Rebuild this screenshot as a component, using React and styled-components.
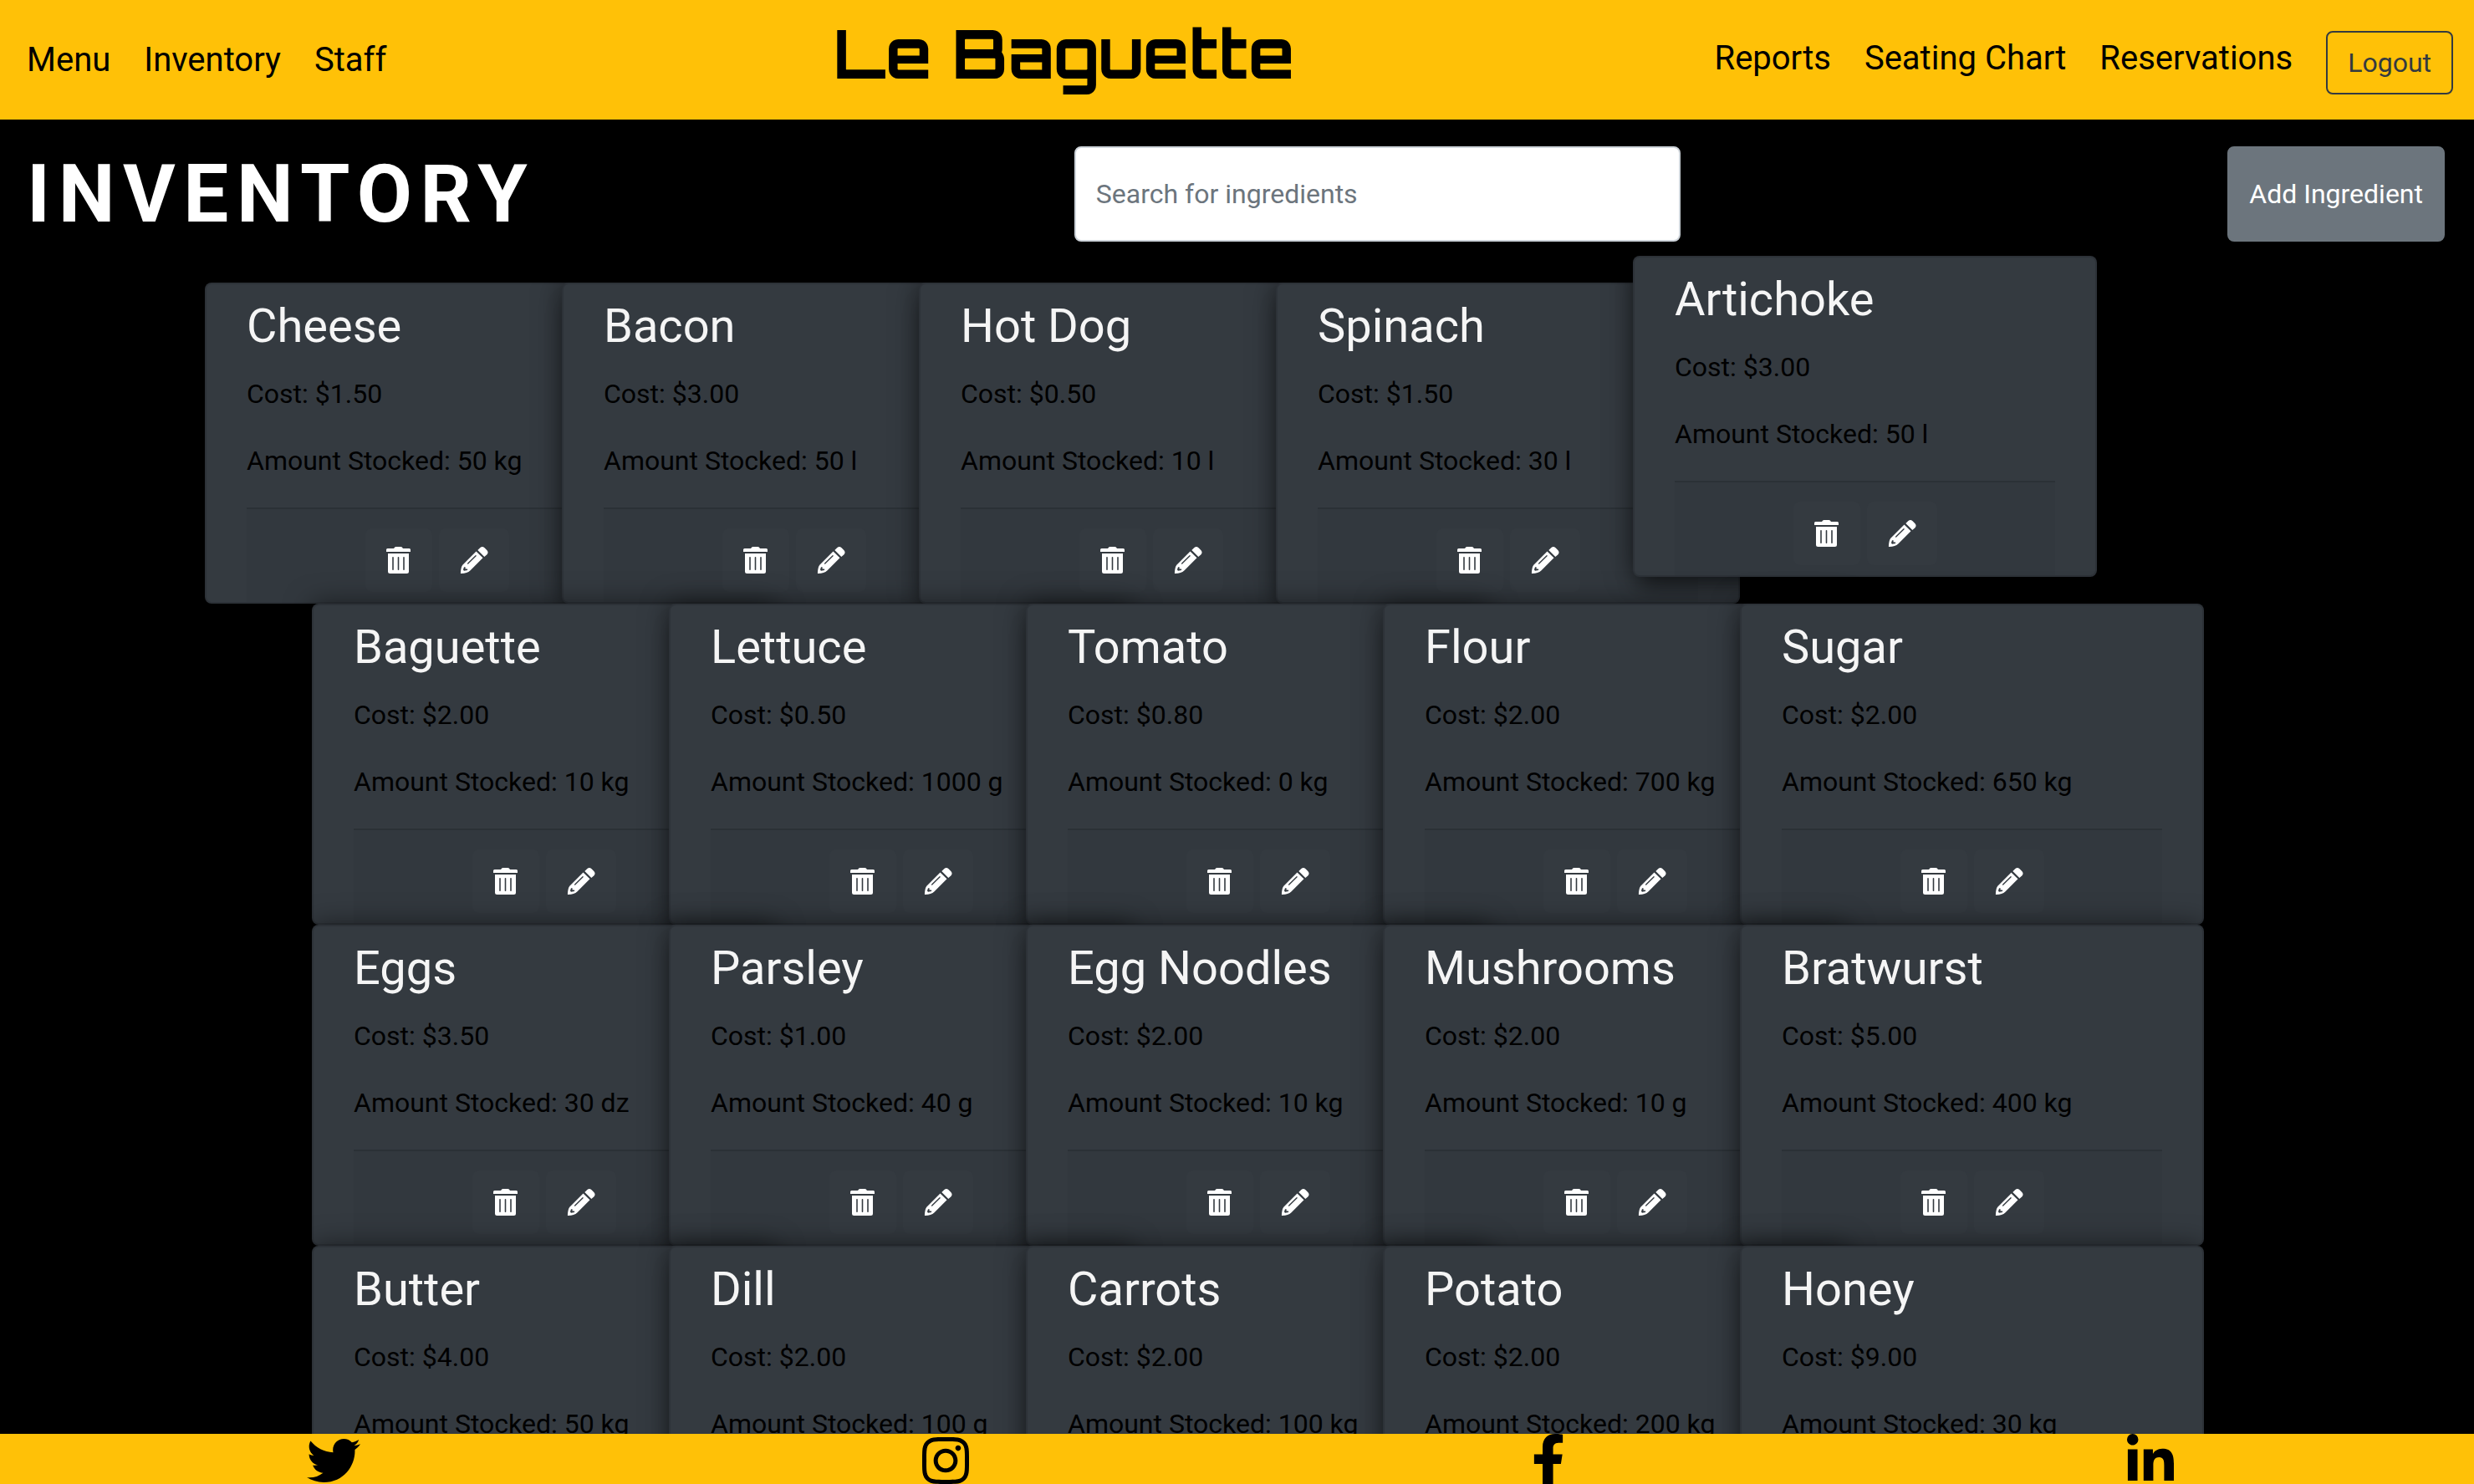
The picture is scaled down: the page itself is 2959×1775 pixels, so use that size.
import React from "react";
import styled, { createGlobalStyle, css } from "styled-components";
import { FaTwitter, FaInstagram, FaFacebookF, FaLinkedinIn } from "react-icons/fa";

const GlobalStyle = createGlobalStyle`
  *, *::before, *::after { box-sizing: border-box; }
  body {
    margin: 0;
    background: #000;
    color: #000;
    font-family: Roboto, "Liberation Sans", sans-serif;
    font-size: 32px;
    line-height: 48px;
  }
`;

const Page = styled.div`
  display: flex;
  flex-direction: column;
  height: 100vh;
`;

const NavBar = styled.header`
  display: flex;
  flex: none;
  justify-content: space-between;
  align-items: flex-start;
  min-height: 143px;
  padding: 16px 25px 16px 32px;
  background: #ffc107;
`;

const NavGroup = styled.nav`
  display: flex;
  align-items: flex-start;
  gap: 40px;
  padding-top: ${(p) => (p.$end ? 21 : 23)}px;
  padding-right: ${(p) => (p.$end ? 0 : 32)}px;
`;

const NavLink = styled.a`
  color: #000;
  font-size: 40px;
  line-height: 65px;
  text-decoration: none;
`;

const Brand = styled.a`
  color: #000;
  font-family: Orbitron, "DejaVu Sans", sans-serif;
  font-size: 80px;
  font-weight: 700;
  line-height: 94px;
  text-decoration: none;
`;

const Button = styled.button`
  flex: none;
  padding: 12px 24px;
  border: 2px solid;
  border-radius: 8px;
  font: inherit;
  ${(p) =>
    p.$outline
      ? css`
          border-color: #343a40;
          background: transparent;
          color: #343a40;
        `
      : css`
          border-color: #6c757d;
          background: #6c757d;
          color: #fff;
        `}
`;

const Toolbar = styled.div`
  display: flex;
  flex: none;
  justify-content: space-between;
  align-items: stretch;
  padding: 32px 35px 17px 32px;
`;

const Title = styled.h1`
  margin: 0;
  color: #fff;
  font-size: 96px;
  font-weight: 700;
  line-height: 114px;
  letter-spacing: 0.1em;
`;

const Search = styled.input`
  width: 725px;
  margin-right: 10px;
  padding: 12px 24px;
  border: 2px solid #ced4da;
  border-radius: 8px;
  background: #fff;
  color: #495057;
  font: inherit;
  &::placeholder { color: #6c757d; opacity: 1; }
`;

const Deck = styled.main`
  flex: 1;
  min-height: 0;
  padding: 32px 0 0 50px;
  overflow-x: hidden;
  overflow-y: auto;
  scrollbar-width: none;
`;

const Row = styled.ul`
  display: flex;
  justify-content: center;
  margin: 0 ${(p) => (p.$shifted ? 256 : 0)}px 0 0;
  padding: 0;
  list-style: none;
`;

const Card = styled.li`
  position: relative;
  flex: none;
  display: flex;
  flex-direction: column;
  width: 555px;
  height: 384px;
  padding: 17px 48px 0;
  border: 2px solid rgba(0, 0, 0, 0.125);
  border-radius: 8px;
  background: #343a40;
  box-shadow:
    0 0 32px rgba(0, 0, 0, 0.5),
    0 20px 24px -8px rgba(0, 0, 0, 0.4);
  & + & { margin-left: -128px; }
  ${(p) => p.$raised && css`transform: translateY(-32px);`}
`;

const CardTitle = styled.h2`
  margin: 0 0 23px;
  color: #f5f5f5;
  font-size: 56px;
  font-weight: 400;
  line-height: 67px;
`;

const CardText = styled.p`
  margin: 0 0 32px;
  white-space: nowrap;
`;

const CardFooter = styled.div`
  flex: 1;
  display: flex;
  justify-content: center;
  align-items: flex-start;
  gap: 8px;
  padding-top: 23px;
  border-top: 2px solid rgba(0, 0, 0, 0.125);
  background: rgba(0, 0, 0, 0.03);
`;

const IconButton = styled.button`
  display: grid;
  place-items: center;
  height: 76px;
  padding: 0 25px;
  border: 0;
  border-radius: 8px;
  background: #343a40;
  color: #fff;
`;

const Footer = styled.footer`
  display: flex;
  flex: none;
  justify-content: space-around;
  align-items: flex-start;
  height: 60px;
  padding: 0 23px 0 31px;
  overflow: hidden;
  background: #ffc107;
`;

const Social = styled.a`
  flex: none;
  width: ${(p) => p.$width}px;
  color: #000;
  svg {
    display: block;
    width: 100%;
    height: 64px;
  }
`;

const TrashIcon = () => (
  <svg width="30" height="32" viewBox="0 0 30 32" fill="currentColor" aria-hidden="true">
    <path
      fillRule="evenodd"
      d="M1.500 2H9l1-1.300Q10.500 0 11.500 0h6q1 0 1.500.7L20 2h7.500Q29 2 29 3.500V6H0V3.500Q0 2 1.500 2ZM2 8h25v21.500q0 2.500-2.500 2.500h-20Q2 32 2 29.500ZM8 12q-.8 0-.8.800v14.400q0 .8.800.8t.8-.8V12.800q0-.8-.8-.8Zm6.500 0q-.8 0-.8.800v14.400q0 .8.800.8t.8-.8V12.800q0-.8-.8-.8Zm6.500 0q-.8 0-.8.800v14.400q0 .8.800.8t.8-.8V12.800q0-.8-.8-.8Z"
    />
  </svg>
);

const PencilIcon = () => (
  <svg width="34" height="32" viewBox="0 0 34 32" fill="currentColor" aria-hidden="true">
    <path
      fillRule="evenodd"
      d="M19.500 5.500 27.500 13.300 12.300 28.400Q9 31.700 1.500 32 .8 32 .9 31.200 1.200 24.200 3.300 21.700ZM18.600 10.200 9.200 19.600Q8.600 20.600 9.900 20.800L19.600 11.300Q20 9.800 18.600 10.200ZM5 24.200 4 27.200Q4.200 29 6.200 28.600L9.200 28 9 26.400H6.600V24.200ZM21.300 3.900 24.400 1Q26.900-.8 29.300 1L32.500 4.200Q34.600 6.600 32.500 9.200L29.300 12.100Z"
    />
  </svg>
);

const rows = [
  [
    ["Cheese", "1.50", "50 kg"],
    ["Bacon", "3.00", "50 l"],
    ["Hot Dog", "0.50", "10 l"],
    ["Spinach", "1.50", "30 l"],
    ["Artichoke", "3.00", "50 l"],
  ],
  [
    ["Baguette", "2.00", "10 kg"],
    ["Lettuce", "0.50", "1000 g"],
    ["Tomato", "0.80", "0 kg"],
    ["Flour", "2.00", "700 kg"],
    ["Sugar", "2.00", "650 kg"],
  ],
  [
    ["Eggs", "3.50", "30 dz"],
    ["Parsley", "1.00", "40 g"],
    ["Egg Noodles", "2.00", "10 kg"],
    ["Mushrooms", "2.00", "10 g"],
    ["Bratwurst", "5.00", "400 kg"],
  ],
  [
    ["Butter", "4.00", "50 kg"],
    ["Dill", "2.00", "100 g"],
    ["Carrots", "2.00", "100 kg"],
    ["Potato", "2.00", "200 kg"],
    ["Honey", "9.00", "30 kg"],
  ],
];

const socials = [
  { label: "Twitter", Icon: FaTwitter, width: 64 },
  { label: "Instagram", Icon: FaInstagram, width: 56 },
  { label: "Facebook", Icon: FaFacebookF, width: 40 },
  { label: "LinkedIn", Icon: FaLinkedinIn, width: 56 },
];

function IngredientCard({ name, cost, stock, raised }) {
  return (
    <Card $raised={raised}>
      <CardTitle>{name}</CardTitle>
      <CardText>Cost: ${cost}</CardText>
      <CardText>Amount Stocked: {stock}</CardText>
      <CardFooter>
        <IconButton type="button" aria-label={`Delete ${name}`}>
          <TrashIcon />
        </IconButton>
        <IconButton type="button" aria-label={`Edit ${name}`}>
          <PencilIcon />
        </IconButton>
      </CardFooter>
    </Card>
  );
}

export default function App() {
  return (
    <Page>
      <GlobalStyle />
      <NavBar>
        <NavGroup>
          <NavLink href="#menu">Menu</NavLink>
          <NavLink href="#inventory">Inventory</NavLink>
          <NavLink href="#staff">Staff</NavLink>
        </NavGroup>
        <Brand href="#home">Le Baguette</Brand>
        <NavGroup $end>
          <NavLink href="#reports">Reports</NavLink>
          <NavLink href="#seating">Seating Chart</NavLink>
          <NavLink href="#reservations">Reservations</NavLink>
          <Button type="button" $outline>Logout</Button>
        </NavGroup>
      </NavBar>
      <Toolbar>
        <Title>INVENTORY</Title>
        <Search type="search" aria-label="Search for ingredients" placeholder="Search for ingredients" />
        <Button type="button">Add Ingredient</Button>
      </Toolbar>
      <Deck>
        {rows.map((row, r) => (
          <Row key={r} $shifted={r === 0}>
            {row.map(([name, cost, stock]) => (
              <IngredientCard
                key={name}
                name={name}
                cost={cost}
                stock={stock}
                raised={name === "Artichoke"}
              />
            ))}
          </Row>
        ))}
      </Deck>
      <Footer>
        {socials.map(({ label, Icon, width }) => (
          <Social key={label} href={`#${label.toLowerCase()}`} aria-label={label} $width={width}>
            <Icon />
          </Social>
        ))}
      </Footer>
    </Page>
  );
}
